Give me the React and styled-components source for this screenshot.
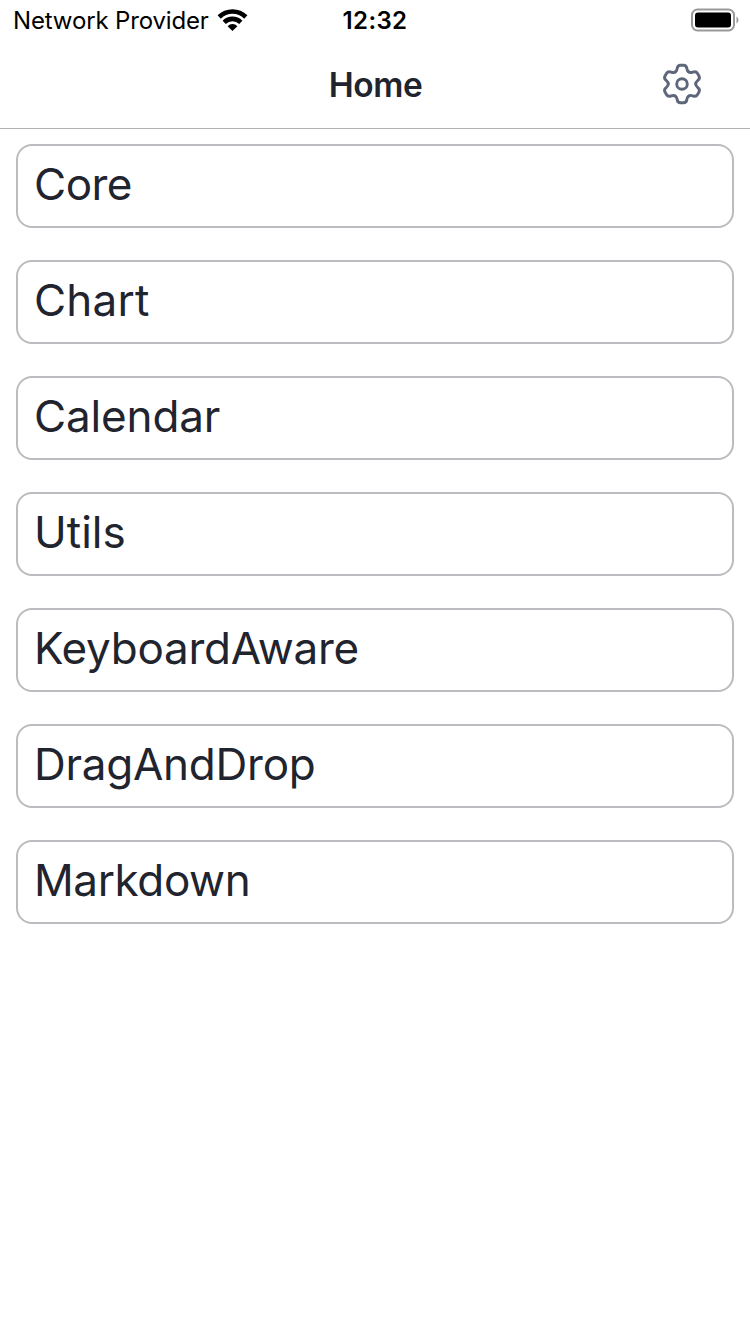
import React from "react";
import styled, { createGlobalStyle } from "styled-components";

const GlobalStyle = createGlobalStyle`
  * { box-sizing: border-box; }
  body { margin: 0; background: #fff; font-family: Inter, "Liberation Sans", sans-serif; }
`;

const Screen = styled.div`
  display: flex;
  flex-direction: column;
  width: 750px;
  height: 1334px;
  background: #fff;
  color: #1f242e;
`;

const StatusBar = styled.div`
  display: grid;
  grid-template-columns: 1fr auto 1fr;
  align-items: center;
  height: 40px;
  padding: 0 11px 0 13px;
  color: #000;
  font-size: 24px;
`;

const Carrier = styled.div`
  display: flex;
  align-items: center;
  gap: 8px;
  letter-spacing: -0.15px;
  white-space: nowrap;
`;

const Label = styled.span`
  padding-top: 2px;
  line-height: 38px;
`;

const Clock = styled.div`
  padding: 2px 2px 0 0;
  line-height: 38px;
  font-weight: 600;
  letter-spacing: 0.4px;
`;

const BatterySlot = styled.div`
  display: flex;
  justify-content: flex-end;
`;

const Header = styled.header`
  display: grid;
  grid-template-columns: 1fr auto 1fr;
  align-items: center;
  height: 89px;
  border-bottom: 1px solid #b2b2b3;
`;

const Title = styled.h1`
  grid-column: 2;
  margin: 0;
  padding: 1px 0 0 1px;
  font-size: 33.5px;
  font-weight: 600;
  letter-spacing: -0.4px;
  line-height: 40px;
`;

const SettingsButton = styled.button`
  display: flex;
  justify-self: end;
  margin-right: 44px;
  padding: 0;
  border: 0;
  background: none;
  color: #5d667b;
`;

const List = styled.main`
  display: flex;
  flex-direction: column;
  gap: 32px;
  padding: 15px 16px;
`;

const Item = styled.div`
  height: 84px;
  padding: 0 16px;
  border: 2px solid #bcbcc0;
  border-radius: 16px;
  font-size: 44px;
  font-weight: 400;
  line-height: 76px;
  letter-spacing: ${({ $tracking }) => $tracking}px;
  white-space: nowrap;
`;

const WifiIcon = () => (
  <svg width="31" height="24" viewBox="0 0 31 24" fill="none" stroke="#000" strokeWidth="4.6">
    <path d="M2.2 9a19 19 0 0 1 26.6 0" />
    <path d="M7.2 14.3a11.8 11.8 0 0 1 16.6 0" />
    <path d="M15.5 23l-4.9-4.8a6.8 6.8 0 0 1 9.8 0z" fill="#000" stroke="none" />
  </svg>
);

const BatteryIcon = () => (
  <svg width="48" height="24" viewBox="0 0 48 24">
    <rect x="1" y="1.5" width="42" height="21" rx="5.5" fill="none" stroke="#999" strokeWidth="2" />
    <rect x="4" y="4.5" width="36" height="15" rx="3" fill="#000" />
    <path d="M45.5 8.5c2.6 1.4 2.6 5.6 0 7z" fill="#999" />
  </svg>
);

const TOOTH =
  "M-6.9-11.9C-5.5-12.7-5.1-13.8-4.9-15.2C-4.6-17.5-3.4-18.7-1.6-18.7H1.6C3.4-18.7 4.6-17.5 4.9-15.2C5.1-13.8 5.5-12.7 6.9-11.9";

const GearIcon = () => (
  <svg width="48" height="48" viewBox="-24 -24 48 48" fill="none" stroke="currentColor" strokeWidth="2.9" strokeLinecap="round">
    {[0, 60, 120, 180, 240, 300].map((angle) => (
      <path key={angle} d={TOOTH} transform={`rotate(${angle})`} />
    ))}
    <circle r="5.3" />
  </svg>
);

const sections = [
  { name: "Core", tracking: -0.5 },
  { name: "Chart", tracking: 0.2 },
  { name: "Calendar", tracking: -0.15 },
  { name: "Utils", tracking: 0 },
  { name: "KeyboardAware", tracking: -0.27 },
  { name: "DragAndDrop", tracking: -0.25 },
  { name: "Markdown", tracking: -0.38 },
];

export default function App() {
  return (
    <Screen>
      <GlobalStyle />
      <StatusBar>
        <Carrier>
          <Label>Network Provider</Label>
          <WifiIcon />
        </Carrier>
        <Clock>12:32</Clock>
        <BatterySlot>
          <BatteryIcon />
        </BatterySlot>
      </StatusBar>
      <Header>
        <Title>Home</Title>
        <SettingsButton aria-label="Settings">
          <GearIcon />
        </SettingsButton>
      </Header>
      <List>
        {sections.map(({ name, tracking }) => (
          <Item key={name} $tracking={tracking}>
            {name}
          </Item>
        ))}
      </List>
    </Screen>
  );
}
